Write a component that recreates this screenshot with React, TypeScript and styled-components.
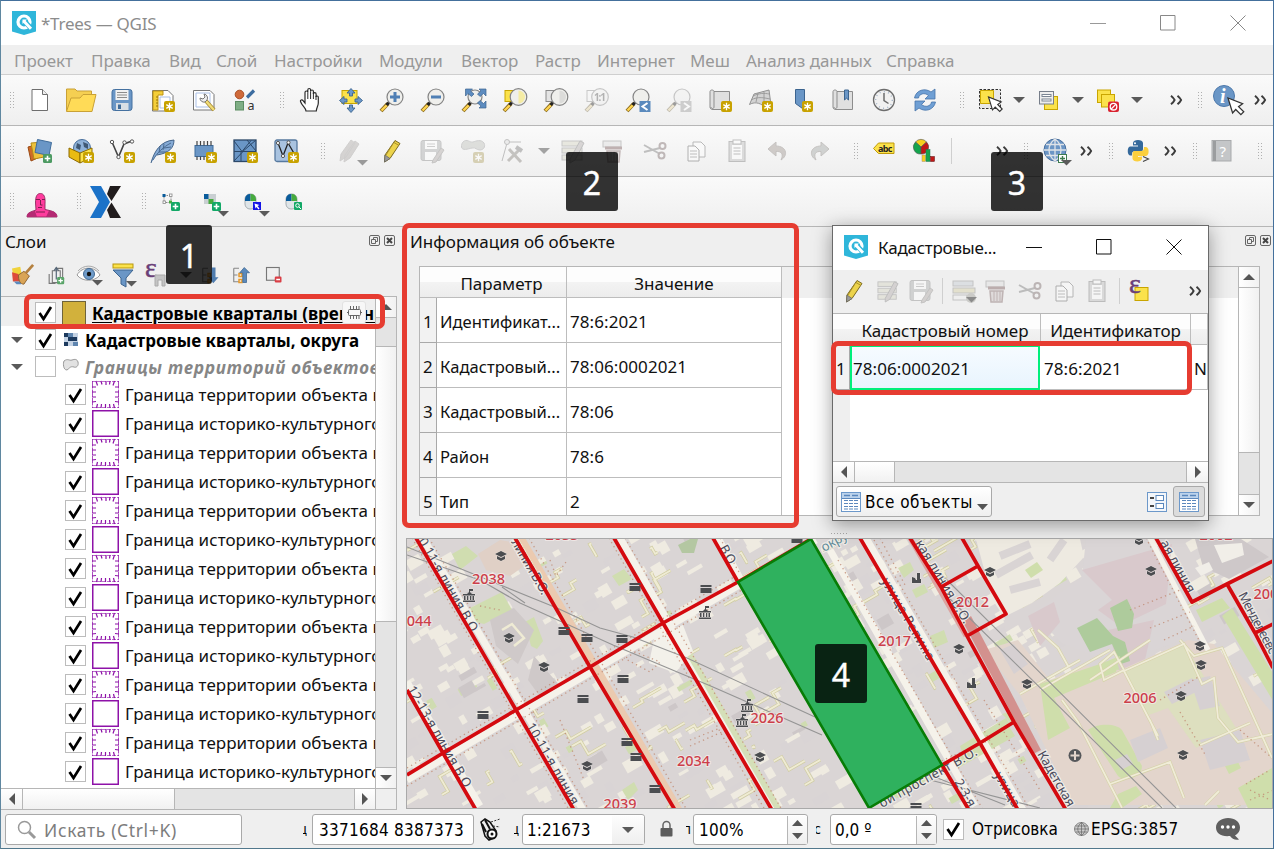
import React from 'react';
import styled, { createGlobalStyle, css } from 'styled-components';

const UI = '"Noto Sans", "Open Sans", sans-serif';
const TAHOMA = '"DejaVu Sans Condensed", "DejaVu Sans", "Noto Sans", sans-serif';

const GlobalStyle = createGlobalStyle`
  *, *::before, *::after { box-sizing: border-box; }
  body { margin: 0; overflow: hidden; font-family: ${UI}; font-size: 17px; color: #111; }
  svg { display: block; overflow: visible; flex: none; }
`;

/* ---------- window frame ---------- */
const Window = styled.div`
  position: relative; width: 1274px; height: 849px; background: #efefef;
  border: 1px solid #44709c; border-left-color: #5f87a0; border-bottom-color: #51788c;
  display: flex; flex-direction: column; overflow: hidden;
`;
const TitleBar = styled.header`
  height: 44px; background: #fff; display: flex; align-items: center; padding: 0 27px 0 11px; flex: none;
`;
const Title = styled.span<{ $color?: string; $ml?: number }>`
  color: ${p => p.$color ?? '#8c8c8c'}; font-size: 17px; letter-spacing: -0.25px; white-space: pre; margin-left: ${p => p.$ml ?? 5}px;
`;
const WinButtons = styled.div<{ $gap: number }>`
  margin-left: auto; display: flex; align-items: center; gap: ${p => p.$gap}px;
`;
const MenuBar = styled.nav`
  height: 30px; flex: none; display: flex; align-items: center; padding-left: 13px;
  border-bottom: 1px solid #cfcfcf; color: #989898; font-size: 17px; background: #efefef;
`;
const MenuItem = styled.span<{ $w: number }>`
  width: ${p => p.$w}px; white-space: nowrap; letter-spacing: -0.05px; padding-top: 1px;
`;
const Toolbar = styled.div<{ $h: number }>`
  height: ${p => p.$h}px; flex: none; display: flex; align-items: center;
  background: linear-gradient(#fafafa, #efefef); border-bottom: 1px solid #b6b6b6;
`;
const Slot = styled.div<{ $w?: number; $end?: boolean; $dim?: boolean; $y?: number }>`
  width: ${p => p.$w ?? 41}px; flex: none; display: flex; align-items: center;
  justify-content: ${p => (p.$end ? 'flex-end' : 'center')};
  padding-top: ${p => p.$y ?? 0}px;
  opacity: ${p => (p.$dim ? 0.42 : 1)};
  ${p => p.$dim && css`filter: grayscale(0.6);`}
`;
const HandleBox = styled.div<{ $pl: number; $w: number }>`
  width: ${p => p.$w}px; padding-left: ${p => p.$pl}px; flex: none;
`;
const HandleDots = styled.div`
  width: 4px; height: 17px;
  background-image: linear-gradient(#b0b0b0, #b0b0b0), linear-gradient(#b0b0b0, #b0b0b0);
  background-size: 1px 100%, 1px 100%; background-position: 0 0, 3px 0; background-repeat: no-repeat;
  mask-image: repeating-linear-gradient(#000 0 1px, transparent 1px 3px);
`;
const Separator = styled.div`width: 1px; height: 26px; background: #cfcfcf;`;
const Handle = ({ pl = 14.5, w = 24 }: { pl?: number; w?: number }) => (
  <HandleBox $pl={pl} $w={w}><HandleDots /></HandleBox>
);

/* ---------- icons ---------- */
const Ic = ({ children, s = 24 }: { children: React.ReactNode; s?: number }) => (
  <svg width={s} height={s} viewBox="0 0 24 24" fill="none">{children}</svg>
);
const Star = ({ x = 13, y = 13 }: { x?: number; y?: number }) => (
  <g transform={`translate(${x} ${y})`}>
    <rect width="11" height="11" rx="2" fill="#c8a200" />
    <path d="M5.5 1.8v7.4M2.3 3.6l6.4 3.8M8.7 3.6L2.3 7.4" stroke="#fff" strokeWidth="1.3" />
    <circle cx="5.5" cy="5.5" r="1.2" fill="#fff" />
  </g>
);
const Plus = ({ x = 14, y = 14, c = '#4c9a62' }: { x?: number; y?: number; c?: string }) => (
  <g transform={`translate(${x} ${y})`}>
    <rect width="9" height="9" rx="1.5" fill={c} />
    <path d="M4.5 1.7v5.6M1.7 4.5h5.6" stroke="#fff" strokeWidth="1.6" />
  </g>
);
const Drop = ({ x, y, c = '#5a5a5a' }: { x: number; y: number; c?: string }) => (
  <path d={`M${x} ${y}h11l-5.5 5.5z`} fill={c} />
);
const DropIcon = ({ c = '#5a5a5a' }: { c?: string }) => (
  <svg width="12" height="6" viewBox="0 0 12 6"><path d="M0 0h12L6 6z" fill={c} /></svg>
);
const More = () => (
  <svg width="13" height="10" viewBox="0 0 13 10" fill="none">
    <path d="M1 .7c2 1.7 3 3 3.6 4.3C4 6.300 3 7.600 1 9.300M7.500 .7c2 1.700 3 3 3.600 4.300-.6 1.300-1.600 2.600-3.600 4.300" stroke="#3c3c3c" strokeWidth="1.9" />
  </svg>
);
const Logo = () => (
  <svg width="24" height="24" viewBox="0 0 24 24" fill="none">
    <path d="M0 0h24v20.500L12 24 0 20.500z" fill="#2fb6da" />
    <circle cx="12" cy="11" r="6" stroke="#fff" strokeWidth="3.200" />
    <path d="M11 9l9 9" stroke="#2fb6da" strokeWidth="5" />
    <path d="M11.500 9.800l7.500 8" stroke="#fff" strokeWidth="3" />
    <path d="M10.500 8.500h4.500l-4.500 4.500z" fill="#fff" />
  </svg>
);
const Page = () => (
  <Ic><path d="M4 1.500h10.500l5 5v16H4z" fill="#fff" stroke="#6e6e6e" /><path d="M14.500 1.500v5h5" stroke="#6e6e6e" fill="#eee" /></Ic>
);
const Folder = () => (
  <Ic>
    <path d="M-2.500 23V1h8.500l2 2h14.500v7" fill="#f5cf52" stroke="#c9a136" />
    <path d="M-2.500 23.500L2 10h9l3-3.500h13L23 23.500z" fill="#ffdb57" stroke="#c9a136" strokeLinejoin="round" />
  </Ic>
);
const Save = () => (
  <Ic>
    <rect x="2" y="1.500" width="20" height="21" rx="2.500" fill="#6a96c6" stroke="#4571a0" />
    <rect x="5.500" y="2" width="13" height="10" fill="#f2f2f2" />
    <path d="M7 4.500h10M7 7h10M7 9.500h10" stroke="#8c8c8c" />
    <rect x="6" y="15" width="12.500" height="7" fill="#d9dfe5" /><rect x="8" y="16.500" width="3" height="4.500" fill="#3f6b99" />
  </Ic>
);
const NewLayout = () => (
  <Ic>
    <path d="M1.500 2.500H17l5 5V23H1.500z" fill="#fff" stroke="#777" />
    <path d="M9 9h10v11H9z" stroke="#a9bfe6" />
    <path d="M2 3h10v4H7v15H2z" fill="#f4cf3a" stroke="#bd9414" /><path d="M5 9h2M5 12h2M5 15h2M5 18h2" stroke="#96740a" />
    <Star />
  </Ic>
);
const Layouts = () => (
  <Ic>
    <path d="M1.500 2.500H18l4 4V22H1.500z" fill="#fff" stroke="#777" /><path d="M4 5h14v14H4z" stroke="#a9bfe6" />
    <path d="M14 13l8 9" stroke="#a38631" strokeWidth="4" /><path d="M14 13l8 9" stroke="#f0dc77" strokeWidth="2.500" />
    <path d="M8 10a4 4 0 0 0 5 4l2-2a4 4 0 0 0-3-6l1 3-2 2z" fill="#eee" stroke="#777" />
  </Ic>
);
const StyleIcon = () => (
  <Ic>
    <circle cx="6.500" cy="6.500" r="4.300" fill="#cf6a3a" stroke="#aa4d23" />
    <path d="M14 9.500l7-7" stroke="#3d6da0" strokeWidth="3.200" />
    <rect x="2.500" y="13.500" width="8" height="8.500" fill="#7fae85" stroke="#5c8d63" />
    <text x="14.500" y="22" fontFamily={UI} fontSize="12.500" fill="#333">a</text>
  </Ic>
);
const Hand = () => (
  <Ic>
    <path d="M8 23c0-3-4-5-5.500-9.500-.5-1.500 1.500-2.300 2.600-.8L7 15V4.500c0-2 2.800-2 2.800 0V2c0-2 2.800-2 2.800 0v1.500c0-2 2.800-2 2.800 0V6c0-1.800 2.700-1.800 2.700 0v3c0-1.500 2.200-1.300 2.200.3V15c0 3-2 5-2 8z" fill="#fff" stroke="#2b2b2b" strokeWidth="1.200" />
    <path d="M9.800 4.500V11M12.600 3.500V11M15.400 5V11M18 8v4" stroke="#2b2b2b" />
  </Ic>
);
const PanSel = () => (
  <Ic>
    <rect x="3" y="2.500" width="15" height="13" fill="#fbe24b" stroke="#c9a500" />
    <path d="M12 .5l4 4.500h-2.500v3h-3V5H8zM12 24.500l4-4.500h-2.500v-3h-3v3H8zM.5 12.500l4.500-4V11h3v3H5v2.500zM23.500 12.500l-4.500-4V11h-3v3h3v2.500z" fill="#6c98ca" stroke="#3c648f" strokeWidth=".9" />
  </Ic>
);
const Lens = ({ children, lx = 14, r = 8 }: { children?: React.ReactNode; lx?: number; r?: number }) => (
  <>
    <path d="M8 15.500L1 23" stroke="#8a6a1c" strokeWidth="4" /><path d="M7 17L1.500 22.500" stroke="#ffd551" strokeWidth="2.400" />
    <path d="M9 14.500l-2.500 2.500" stroke="#222" strokeWidth="3" />
    <circle cx={lx} cy="9" r={r} fill="#efefec" stroke="#848484" strokeWidth="1.200" />
    {children}
  </>
);
const ZoomIn = () => <Ic><Lens lx={15}><path d="M15 4v10M10 9h10" stroke="#4f7fb4" strokeWidth="3" /></Lens></Ic>;
const ZoomOut = () => <Ic><Lens lx={15}><path d="M10 9h10" stroke="#4f7fb4" strokeWidth="3" /></Lens></Ic>;
const ZoomFull = () => (
  <Ic>
    <Lens r={7} lx={13} />
    <path d="M3.500 1h7L8.500 3l3.500 3-2.500 2.500L6 5.500 3.500 8zM24 1h-7l2 2-3.500 3L18 8.500l3.500-3L24 8zM24 20h-7l2-2-3.500-3L18 12.500l3.500 3L24 13z" fill="#5d8cc0" stroke="#3c648f" strokeWidth=".7" />
  </Ic>
);
const ZoomSel = () => (
  <Ic><rect x="2" y="2.500" width="12" height="11" fill="#fbe24b" stroke="#c9a500" /><Lens lx={15.500} r={8.300}><path d="M15.500 2.500v13a6.500 6.500 0 0 0 0-13z" fill="#f5eca4" /></Lens></Ic>
);
const ZoomLayer = () => (
  <Ic><rect x="2" y="2.500" width="12" height="11" fill="#e4e4e4" stroke="#8a8a8a" /><Lens lx={15.500} r={8.300}><path d="M15.500 2.500v13a6.500 6.500 0 0 0 0-13z" fill="#dcdcda" /></Lens></Ic>
);
const ZoomOne = () => (
  <Ic><rect x="2" y="2.500" width="12" height="11" stroke="#8a8a8a" /><Lens lx={15} r={8.300}><text x="9" y="12.500" fontSize="10" fontWeight="700" fontFamily={UI} fill="#555" textLength="12">1:1</text></Lens></Ic>
);
const ZoomLast = ({ next }: { next?: boolean }) => (
  <Ic><Lens lx={15} /><rect x="13.500" y="13" width="11" height="11" fill={next ? '#999' : '#5b8abd'} /><path d={next ? 'M17 15l5 3.500-5 3.500' : 'M21.500 15l-5 3.500 5 3.500'} stroke="#fff" strokeWidth="2" /></Ic>
);
const MapView = ({ book }: { book?: boolean }) => (
  <Ic>
    <path d="M6 3.500h15.500v18H5c-2 0-3-1-3-2.500V3.500c0-2 4-2 4 0V19c0 2-3 2-3 0" fill="#e0e0e0" stroke="#8d8d8d" />
    {book ? <path d="M13.500 2h4v10l-2-1.800-2 1.800z" fill="#6a96c6" stroke="#3c648f" /> : <Star x={13} y={13} />}
  </Ic>
);
const View3D = () => (
  <Ic><path d="M.5 16.500L5 6l15-4 2 15-6 2C10 14 5 14 .5 16.500z" fill="#d3d3d3" stroke="#929292" /><path d="M2 12c7-4 14-2 19-1M9 5l-2 9M15 4v13M4 8c6-3 12-3 16-2" stroke="#929292" strokeWidth=".8" /><Star /></Ic>
);
const Bookmark = () => <Ic><path d="M5.500 1.500h9V16l-2 4.500-7-5z" fill="#6a96c6" stroke="#3c648f" /><Star x={12} /></Ic>;
const Clock = () => (
  <Ic><circle cx="12" cy="12" r="10.500" fill="#f1f1f1" stroke="#6d6d6d" strokeWidth="1.300" /><circle cx="12" cy="12" r="8.300" stroke="#a5b5c9" strokeDasharray="1 3.300" strokeWidth="1.400" /><path d="M12 5v7.500l4.500 3" stroke="#6d6d6d" strokeWidth="1.500" /></Ic>
);
const Refresh = () => (
  <Ic>
    <path d="M1.500 10C3 2 12-.5 18 4l4-3v10H12l3.500-3.500C11.500 4 6 6 5.500 10z" fill="#6f9fd4" stroke="#4674aa" strokeWidth=".8" />
    <path d="M22.500 14C21 22 12 24.500 6 20l-4 3V13h10l-3.500 3.500c4 3.500 9.500 1.500 10-2.500z" fill="#6f9fd4" stroke="#4674aa" strokeWidth=".8" />
  </Ic>
);
const Cursor = ({ x, y, s = 1 }: { x: number; y: number; s?: number }) => (
  <path transform={`translate(${x} ${y}) scale(${s})`} d="M0 0l4 13 2.700-3 4.500 4.500 2.500-2.500L9.200 7.500l3.500-2.500z" fill="#fff" stroke="#333" strokeWidth="1.100" />
);
const SelectIcon = () => (
  <Ic><rect x="1.500" y="1.500" width="21" height="19" fill="#e8e8e8" stroke="#333" strokeDasharray="2.500 1.500" /><path d="M2.500 2.500h13v13h-13z" fill="#fbe24b" stroke="#c9a500" /><Cursor x={10.500} y={9} /></Ic>
);
const SelForm = () => (
  <Ic><rect x="8.500" y="8.500" width="13" height="13" fill="#fbe24b" stroke="#c9a500" /><rect x="3.500" y="3.500" width="14" height="12.500" fill="#eee" stroke="#777e8a" /><path d="M5.500 7.500h10M5.500 12h10" stroke="#7c8694" strokeWidth="3" /><path d="M6.500 7.500h8M6.500 12h8" stroke="#fff" /></Ic>
);
const Deselect = () => (
  <Ic>
    <rect x="2.500" y="2" width="13" height="12.500" fill="#fbe24b" stroke="#c9a500" /><rect x="6.500" y="6.500" width="13" height="12.500" fill="#fbe24b" stroke="#c9a500" />
    <rect x="13" y="13.500" width="11" height="10.500" rx="2" fill="#d9222f" /><circle cx="18.500" cy="18.700" r="3.300" stroke="#fff" strokeWidth="1.300" /><path d="M16.200 21l4.600-4.600" stroke="#fff" strokeWidth="1.300" />
  </Ic>
);
const Identify = () => (
  <Ic><circle cx="10" cy="8" r="10.500" fill="#6a96c6" stroke="#4d79ab" /><text x="6" y="14.500" fontSize="20" fontStyle="italic" fontWeight="700" fontFamily='"Liberation Serif", serif' fill="#fff">i</text><Cursor x={14} y={10} s={1.150} /></Ic>
);

const AddLayer = () => (
  <Ic><path d="M0 8l11-3 3 12-11 5z" fill="#cf6a28" stroke="#9a4a14" /><path d="M3 4l12-1 1 15-10 2z" fill="#eec23c" stroke="#b58b16" /><path d="M9.500 0.500l14 3-2.500 13-14-3z" fill="#6a96c6" stroke="#3f6c9b" /><Plus x={15} y={15} /></Ic>
);
const GeoPkg = () => (
  <Ic><circle cx="13" cy="9" r="8.500" fill="#8fb2d8" stroke="#486f9c" /><path d="M8 4l4 2-1 5-4-2zM14 3l5 2v5l-4-2z" fill="#3f5874" /><path d="M0 9l11 5v10L0 18z" fill="#e9bb13" stroke="#8d6a00" /><path d="M11 14l12-5v9l-12 6z" fill="#fbe24b" stroke="#8d6a00" /><Star x={14} /></Ic>
);
const Vec = () => (
  <Ic><path d="M2 3l6.500 15L14 5l8-3" stroke="#444" strokeWidth="1.600" /><g fill="#fff" stroke="#555"><circle cx="2" cy="3" r="1.700" /><circle cx="8.500" cy="18" r="1.700" /><circle cx="14.500" cy="3.500" r="1.700" /><circle cx="22" cy="2.500" r="1.700" /></g><Star x={14} /></Ic>
);
const Feather = () => (
  <Ic><path d="M0 24C3 13 9 2 23 1c0 8-5 13-17 15" fill="#86abd6" stroke="#44648a" /><path d="M2 21C6 14 12 8 20 4M8 14l1-7M12 11l1-6M9 13h7M13 9l7-1" stroke="#44648a" strokeWidth=".9" /><Star x={14} /></Ic>
);
const Chip = () => (
  <Ic><rect x="3" y="6.500" width="18" height="11" fill="#6a96c6" stroke="#3f6c9b" /><path d="M5 2v4.500M8.500 2v4.500M12 2v4.500M15.500 2v4.500M19 2v4.500M5 17.500V21M8.500 17.500V21M12 17.500V21" stroke="#444" strokeWidth="1.200" /><Star x={14} /></Ic>
);
const Mesh = ({ v }: { v?: boolean }) => (
  <Ic>
    <rect x="1" y="1" width="22" height="21.500" rx={v ? 2 : 0} fill={v ? '#a9c3e0' : '#6a96c6'} stroke={v ? '#57799f' : '#2c4869'} strokeWidth="1.300" />
    {v ? <><path d="M4 4l5 13 5-13 7 12" stroke="#222" strokeWidth="1.300" /><g fill="#fff" stroke="#555"><circle cx="4" cy="4" r="1.600" /><circle cx="9" cy="17" r="1.600" /><circle cx="14.500" cy="3.500" r="1.600" /></g></>
      : <path d="M1 12.500h22M9 12.500l9-11M1 22l9-9.500M1 2l8 10.500M8 13v10M14 1l9 11M23 1L9 13" stroke="#2c4869" />}
    <Star x={14} />
  </Ic>
);
const Pencil = ({ s = 24 }: { s?: number }) => (
  <Ic s={s}><path d="M5 16L15 1.500l5 3L10 19.500 4.500 23z" fill="#ecd34b" stroke="#7b6a20" strokeLinejoin="round" /><path d="M14 3.500l5 3M12.500 5.500L6 16" stroke="#a88f2a" /><path d="M5 16l5 3.500L4.500 23z" fill="#9a9a9a" stroke="#666" strokeWidth=".7" /></Ic>
);
const Pencils = () => (
  <Ic><path d="M2 15L12 1l4 3L7 18l-6 4zM6 16L16 2l4 3-9 14-6 4z" fill="#b0a5a0" stroke="#a09a96" /><Drop x={18} y={21} c="#222" /></Ic>
);
const SaveEdit = () => (
  <Ic><rect x="1" y="1.500" width="20" height="20" rx="2" fill="#a4a8ac" stroke="#888" /><rect x="5" y="2" width="12" height="8" fill="#fff" /><path d="M7 5h8M7 7.500h8" stroke="#999" /><rect x="5" y="13" width="11" height="8" fill="#fff" /><path d="M13 21l8-12 3 2-8 12-4 1z" fill="#b5a5a0" stroke="#8a8580" /></Ic>
);
const AddPoly = () => (
  <Ic><path d="M2 3c4-4 7 1 10 0s8-3 11 1c2 4-1 7-4 7-4 0-4-3-8-2S1 12 .5 8C.3 6 1 4 2 3z" fill="#b9bfb2" stroke="#999" /><Star x={12} /></Ic>
);
const Vertex = () => (
  <Ic><path d="M5 4L0 22M5 3h14" stroke="#777" /><circle cx="5" cy="3" r="2.500" fill="#ddd" stroke="#777" /><path d="M7 10l12 13M18 10L6 22" stroke="#8a7f70" strokeWidth="3" /><path d="M14 8l6 4" stroke="#777" strokeWidth="4" /></Ic>
);
const EditTable = ({ s = 24 }: { s?: number }) => (
  <Ic s={s}><rect x="1" y="2" width="20" height="5" fill="#d8d4a6" stroke="#888" /><rect x="1" y="9" width="20" height="5" fill="#d8d4a6" stroke="#888" /><rect x="1" y="16" width="20" height="5" fill="#d8d4a6" stroke="#888" /><path d="M9 20L19 2l4 2-9 17-5 3z" fill="#b5a9a5" stroke="#777" /></Ic>
);
const Trash = () => (
  <Ic><rect x="1" y="2" width="18" height="6" fill="#ddd" stroke="#888" /><path d="M3 9h17" stroke="#9c4a4a" strokeWidth="3" /><path d="M5 12h13l-1 11H6z" fill="#d8bcbc" stroke="#9c5a5a" strokeWidth="1.500" /><path d="M9 12v10M12 12v10M15 12v10" stroke="#9c5a5a" /></Ic>
);
const Cut = () => (
  <Ic><path d="M1 6l16 9M1 13l16-4" stroke="#777" strokeWidth="2" /><circle cx="19.500" cy="7" r="3" stroke="#8a6060" strokeWidth="2" /><circle cx="18.500" cy="16.500" r="3" stroke="#8a6060" strokeWidth="2" /></Ic>
);
const Copy = () => (
  <Ic><path d="M9 3h8l4 4v11H9z" fill="#fff" stroke="#666" /><path d="M4 7h7l4 4v11H4z" fill="#fff" stroke="#555" /><path d="M6 12h7M6 15h7M6 18h7" stroke="#777" /></Ic>
);
const Paste = () => (
  <Ic><rect x="4" y="2.500" width="16" height="20" fill="#bbb" stroke="#777" /><rect x="7" y="6" width="10" height="14" fill="#fff" /><path d="M8.500 9h7M8.500 12h7M8.500 15h7" stroke="#777" /><rect x="8" y="1" width="8" height="4" fill="#fff" stroke="#777" /></Ic>
);
const Undo = ({ flip }: { flip?: boolean }) => (
  <Ic><g transform={flip ? 'translate(24 0) scale(-1 1)' : undefined}><path d="M2 10l8-7v4c10 0 13 9 5 14 3-6 0-9-5-8.500V17z" fill={flip ? '#9aa59d' : '#a98f80'} stroke="#8a7a70" /></g></Ic>
);
const Abc = () => (
  <Ic><path d="M1.500 9.500l5-5.500h15.500v10.500H6.500z" fill="#fbe24b" stroke="#c09a0a" /><text x="6" y="12.500" fontSize="9" fontWeight="700" fontFamily={UI} fill="#222" textLength="14.500">abc</text></Ic>
);
const Diagram = () => (
  <Ic><path d="M8 8L2.500 3a7 7 0 0 1 11 0z" fill="#f6cf1d" stroke="#555" strokeWidth=".6" /><path d="M8 8L2.500 3a7 7 0 0 0 5.500 12z" fill="#14a44d" stroke="#555" strokeWidth=".6" /><path d="M8 8l5.500-5A7 7 0 0 1 8 15z" fill="#c11717" stroke="#555" strokeWidth=".6" /><rect x="9" y="16" width="3.500" height="6.500" fill="#f6cf1d" stroke="#a87" strokeWidth=".5" /><rect x="13" y="10.500" width="4" height="12" fill="#14a44d" stroke="#275" strokeWidth=".5" /><rect x="17.500" y="17.500" width="4" height="5" fill="#c11717" stroke="#511" strokeWidth=".5" /></Ic>
);
const GlobePlus = () => (
  <Ic><circle cx="12" cy="11" r="11" fill="#6b95c5" stroke="#496f9d" /><path d="M12 0v22M1 11h22M3 5.500h18M3 16.500h18M12 0C4 6 4 16 12 22M12 0c8 6 8 16 0 22" stroke="#dfe3e8" strokeWidth="1.300" /><rect x="15.500" y="15.500" width="8" height="8" fill="#fff" stroke="#3f7b4e" /><path d="M19.500 17v5M17 19.500h5" stroke="#3f7b4e" strokeWidth="1.400" /><Drop x={18} y={21} /></Ic>
);
const Python = () => (
  <Ic>
    <path d="M7 6V4c0-4 10-4 10 0v6c0 2-1 2.500-3 2.500H8.500C6 12.500 6 14 6 16.500H4C1 16.500 1 7.500 4 7.500h8V6.500H7z" fill="#35699b" />
    <path d="M16 17.500v2c0 4-9.500 4-9.500 0v-5c0-2 1-2.500 3-2.500h5.500c2.500 0 3-1.500 3-4h2c3.500 0 3.500 9 0 9h-8v1z" fill="#fbcf3e" />
    <circle cx="9" cy="4.200" r="1" fill="#fff" /><path d="M17 17.500l5.500 2.500-5.500 2.500" stroke="#444" strokeWidth="1.100" />
  </Ic>
);
const Help = () => (
  <Ic><rect x="2" y="1.500" width="19" height="20.500" fill="#c4c6c8" stroke="#a8aaac" /><path d="M4.500 2v20" stroke="#9b9d9f" strokeWidth="3" /><text x="9.500" y="18" fontSize="15" fontFamily={UI} fill="#fff">?</text></Ic>
);
const Statue = () => (
  <svg width="30" height="24" viewBox="0 0 30 24"><path d="M0 24c0-4 3-5 9-7l-.500-7C8.500 3 10 .500 13.500 .500S18.500 4 18 11v5.500c8 1.500 12 3 12 7.500z" fill="#ff3c9e" stroke="#8f2a5f" strokeWidth=".9" /><path d="M0 24c0-5 3-5 8-6l2 6zM30 24c0-5-4-6-8-6.500l-3 6.500z" fill="#b42a73" /><path d="M9 6.500h4M15 6.500h3M13.500 7v5h2M11 14.500h4M9 19h9" stroke="#7a1f4d" fill="none" /></svg>
);
const XLogo = () => (
  <svg width="31" height="32" viewBox="0 0 31 32"><path d="M0 0h11l9 16-9 16H0l9-16z" fill="#1b72c8" /><path d="M20 0h11L21.500 15 17 8zM17 24l4.500-7.500L31 32H20z" fill="#211c1d" /></svg>
);
const GreenTool = ({ kind }: { kind: 'nodes' | 'grid' | 'cursor' | 'search' }) => (
  <Ic>
    {kind === 'nodes' && <><path d="M5 5.500h7v7H5z" stroke="#888" strokeDasharray="1.500 1" /><rect x="3.500" y="4" width="3" height="3" fill="#0a5c9c" /><g fill="#fff" stroke="#888" strokeWidth=".8"><rect x="10.500" y="4" width="2.500" height="2.500" /><rect x="4" y="11" width="2.500" height="2.500" /></g><rect x="10" y="10.500" width="3" height="3" fill="#46aa3e" /><Plus x={12} y={12} c="#12a866" /></>}
    {kind === 'grid' && <><rect x="4" y="4" width="12" height="10" fill="#c9cfd2" /><rect x="4" y="4" width="4.500" height="5" fill="#0a5c9c" /><rect x="8.500" y="9" width="5" height="5" fill="#46aa3e" /><Plus x={12} y={12} c="#12a866" /><Drop x={18} y={21} /></>}
    {(kind === 'cursor' || kind === 'search') && <>
      <rect x="4" y="4" width="11" height="15" rx="5" fill="#dfe5e8" stroke="#a5adb2" /><path d="M9.500 4v7H4V9a5 5 0 0 1 5.500-5z" fill="#0a5c9c" /><path d="M9.500 4v7H15V9a5 5 0 0 0-5.500-5z" fill="#46aa3e" />
      {kind === 'cursor' ? <><rect x="12" y="12" width="8" height="8" fill="#1414e6" /><path d="M13.500 13.500l5 1.500-2 1 2 2.500-1 1-2-2.500-1 1.500z" fill="#fff" /><Drop x={18} y={21} /></>
        : <><rect x="12" y="12" width="8" height="8" rx="1" fill="#12a866" /><circle cx="15.500" cy="15.500" r="1.800" stroke="#fff" /><path d="M17 17l2 2" stroke="#fff" /></>}
    </>}
  </Ic>
);

/* ---------- layers dock ---------- */
const Main = styled.main`flex: 1; display: flex; min-height: 0;`;
const LayersDock = styled.section`width: 397px; flex: none; display: flex; flex-direction: column;`;
const DockTitle = styled.div<{ $pl: number; $h: number; $pr: number }>`
  height: ${p => p.$h}px; padding: 4px ${p => p.$pr}px 0 ${p => p.$pl}px; display: flex; align-items: flex-start;
  justify-content: space-between; flex: none; white-space: nowrap; line-height: 22px;
`;
const DockButtons = styled.div`display: flex; gap: 4px; padding-top: 4px;`;
const DockBtns = () => (
  <DockButtons>
    <svg width="11" height="11" viewBox="0 0 11 11" fill="none"><rect x=".5" y=".5" width="10" height="10" rx="1.500" stroke="#666" /><path d="M2.500 4.500h4v4h-4zM4.500 4V2.500h4v4H7" stroke="#666" /></svg>
    <svg width="11" height="11" viewBox="0 0 11 11" fill="none"><rect x=".5" y=".5" width="10" height="10" rx="1.500" stroke="#666" /><path d="M3 3l5 5M8 3L3 8" stroke="#444" strokeWidth="2" /></svg>
  </DockButtons>
);
const LayerTools = styled.div`height: 39px; flex: none; display: flex; align-items: center; padding: 0 0 3px 5px;`;
const TreeFrame = styled.div`
  flex: 1; min-height: 0; width: 396px; display: grid; grid-template-columns: 374px 22px; grid-template-rows: 1fr 22px;
  border-top: 1px solid #b6b6b6;
`;
const Tree = styled.div`background: #fff; overflow: hidden;`;
const TreeRow = styled.div<{ $h: number; $pl: number; $sel?: boolean }>`
  height: ${p => p.$h}px; padding-left: ${p => p.$pl}px; display: flex; align-items: center;
  background: ${p => (p.$sel ? '#efefef' : '#fff')}; overflow: hidden; white-space: nowrap;
  ${p => p.$sel && css`padding-top: 2px;`}
`;
const Twist = styled.div`width: 23px; flex: none;`;
const Box = styled.div`
  width: 21px; height: 21px; flex: none; border: 1px solid #bcbcbc; background: #fff;
  display: flex; align-items: center; justify-content: center;
`;
const Check = ({ on = true }: { on?: boolean }) => (
  <Box>{on && <svg width="15" height="16" viewBox="0 0 15 16" fill="none"><path d="M1.500 8l4 6L13 2" stroke="#000" strokeWidth="2.700" /></svg>}</Box>
);
const SwatchSolid = styled.div`width: 24px; height: 24px; margin: 0 6px 0 6px; background: #d2b13c; border: 1px solid #6f643a; flex: none;`;
const RowIcon = styled.div<{ $l: number; $r: number; $b?: number }>`margin: 0 ${p => p.$r}px 0 ${p => p.$l}px; padding-bottom: ${p => p.$b ?? 0}px; flex: none;`;
const Label = styled.span<{ $kind?: 'bold' | 'italic' | 'active' }>`
  font-size: 17px; padding-top: 1px; letter-spacing: 0.05px; line-height: 24px;
  ${p => (p.$kind === 'bold' || p.$kind === 'active') && css`font-weight: 700; color: #000; padding-top: 2px; letter-spacing: 0;`}
  ${p => p.$kind === 'active' && css`text-decoration: underline; text-underline-offset: 2px;`}
  ${p => p.$kind === 'italic' && css`font-weight: 700; font-style: italic; color: #868686; letter-spacing: 0.8px; padding-top: 2px;`}
`;
const ChipButton = styled.div`
  position: absolute; left: 341px; top: 300px; width: 24px; height: 23px; background: #f7f7f7; border: 1px solid #e2e2e2;
  border-radius: 3px; display: flex; align-items: center; justify-content: center;
`;
const Spiky = () => (
  <svg width="27" height="27" viewBox="0 0 27 27" fill="none" stroke="#8e12a8">
    <path d="M.5 0v27M26.500 0v27" strokeDasharray="7.500 1" strokeOpacity=".75" /><path d="M0 .5h27M0 26.500h27" strokeDasharray="4 1" strokeOpacity=".6" />
    <path d="M4 0l1.500 4.500M9 0l1 3.500M14 0v4M18 0l-.500 3.500M22.500 0l-1.500 4.500M4.500 27l1-4M9 27l.500-4M13.500 27v-4M18 27l-.500-4M22.500 27l-1-4M0 6h4M0 11h4M0 16h4M0 21l4-.500M27 6h-4M27 11h-4M27 16h-4M27 21l-4-.500" strokeWidth="1.200" />
  </svg>
);
const Outline = () => (
  <svg width="27" height="27" viewBox="0 0 27 27" fill="none"><rect x=".75" y=".75" width="25.500" height="25.500" stroke="#8e12a8" strokeWidth="1.500" /></svg>
);
const SwatchBox = styled.div`width: 27px; margin: 0 6px 0 6px; flex: none;`;

/* ---------- scrollbars ---------- */
const VBar = styled.div`width: 22px; flex: none; display: flex; flex-direction: column; background: #e4e4e4; border-left: 1px solid #b6b6b6; border-right: 1px solid #b6b6b6;`;
const HBar = styled.div`display: flex; background: #e4e4e4; border-top: 1px solid #b6b6b6; border-bottom: 1px solid #b6b6b6; height: 22px; flex: none;`;
const Corner = styled.div`border: 1px solid #b6b6b6; background: #efefef;`;
const Piece = styled.div<{ $len?: number; $v?: boolean; $groove?: boolean; $last?: boolean }>`
  ${p => (p.$len ? css`flex: none;` : css`flex: 1;`)}
  ${p => (p.$v ? css`height: ${p.$len ?? 0}px; border-bottom: ${p.$last ? 0 : 1}px solid #b6b6b6;` : css`width: ${p.$len ?? 0}px; border-right: ${p.$last ? 0 : 1}px solid #b6b6b6;`)}
  background: ${p => (p.$groove ? '#e4e4e4' : p.$v ? 'linear-gradient(90deg,#fff,#f1f1f1)' : 'linear-gradient(#fff,#f1f1f1)')};
  display: flex; align-items: center; justify-content: center;
`;
const Tri = ({ d }: { d: 'u' | 'd' | 'l' | 'r' }) => (
  <svg width="12" height="12" viewBox="0 0 12 12"><path fill="#555" d={{ u: 'M0 9h12L6 3z', d: 'M0 3h12L6 9z', l: 'M9 0v12L3 6z', r: 'M3 0v12l6-6z' }[d]} /></svg>
);

/* ---------- info dock ---------- */
const RightSide = styled.section`flex: 1; padding: 0 0 0 8px; display: flex; flex-direction: column; min-width: 0;`;
const InfoFrame = styled.div`
  margin-left: 13px; width: 841px; height: 250px; flex: none; border-top: 1px solid #b6b6b6; border-bottom: 1px solid #b6b6b6;
  border-left: 1px solid #b6b6b6; background: #fff; display: flex; justify-content: space-between;
`;
const InfoTable = styled.div`flex: 1; overflow: hidden; background: linear-gradient(#efefef 31px, #fff 31px);`;
const InfoRow = styled.div<{ $head?: boolean }>`
  display: grid; width: 362px; grid-template-columns: ${p => (p.$head ? '147px 215px' : '17px 130px 215px')};
  height: ${p => (p.$head ? 31 : 45)}px; background: ${p => (p.$head ? 'linear-gradient(#fdfdfd 50%, #f3f3f3 50%, #ececec)' : '#fff')};
`;
const Cell = styled.div<{ $center?: boolean; $num?: boolean; $pl?: number; $small?: boolean }>`
  display: flex; align-items: center; justify-content: ${p => (p.$center ? 'center' : 'flex-start')};
  padding: 2px 0 0 ${p => p.$pl ?? (p.$center ? 0 : 3)}px; border-right: 1px solid #bdbdbd; border-bottom: 1px solid #bdbdbd;
  white-space: nowrap; overflow: hidden; font-size: ${p => (p.$small ? 16.6 : 17)}px;
  ${p => !p.$small && !p.$center && css`letter-spacing: 0.08px;`}
  ${p => p.$num && css`background: #f2f2f2; border-color: #a9a9a9;`}
`;
const Splitter = styled.div`height: 22px; display: flex; justify-content: center; align-items: center; flex: none; padding-top: 12px;`;
const SplitDots = styled.div`width: 17px; height: 1px; background: repeating-linear-gradient(90deg, #aaa 0 1px, transparent 1px 3px);`;
const MapFrame = styled.div`width: 867px; height: 271px; border: 1px solid #a9a9a9; overflow: hidden; flex: none;`;

/* ---------- map ---------- */
const rand = (seed: number) => () => {
  seed = (seed * 1664525 + 1013904223) % 4294967296;
  return seed / 4294967296;
};
const blocks = (() => {
  const r = rand(77);
  const out: { x: number; y: number; w: number; h: number; c: string }[] = [];
  for (let i = 0; i < 1700; i++) {
    const a = 5 + r() * 14;
    const b = 3 + r() * 9;
    const k = r();
    out.push({ x: -480 + r() * 900, y: -400 + r() * 760, w: a, h: b, c: k < 0.63 ? '#efebe1' : k < 0.67 ? '#cfdcb0' : k < 0.96 ? '#d9d4d5' : '#cdc7c8' });
  }
  return out;
})();
const alleys = (() => {
  const r = rand(9);
  let d = '';
  for (let i = 0; i < 250; i++) {
    const x = -480 + r() * 900, y = -400 + r() * 760, a = (r() - 0.5) * 54, b = (r() - 0.5) * 34;
    d += `M${x.toFixed(0)} ${y.toFixed(0)}h${a.toFixed(0)}v${b.toFixed(0)}h${(a / 2).toFixed(0)}`;
  }
  return d;
})();
const cards = [[635, 587], [706, 589], [564, 631], [587, 638], [622, 639], [623, 679], [583, 699], [483, 715], [627, 742], [636, 757], [655, 789], [797, 539], [916, 807]];
const caps = [[501, 556], [509, 638], [544, 667], [587, 766], [760, 757], [990, 572], [959, 649], [1027, 684], [1151, 571], [1200, 646], [1201, 665], [1181, 696], [1183, 755], [1139, 540]];
const halls = [[469, 596], [705, 613], [747, 706], [742, 721]];
const monuments = [[916, 578], [971, 683]];
const numbers: [string, number, number][] = [['2038', 488.5, 583.5], ['2044', 415, 626], ['2034', 693.5, 765.5], ['2026', 767, 722.5], ['2039', 620, 808.5], ['2017', 894.5, 646], ['2012', 972.5, 607], ['2006', 1140, 702.5], ['2005', 1270, 599], ['2033', 562, 540], ['2002', 1216, 539.5]];
const streets: [string, number, number, number, number, string?][] = [
  ['0.11-я линия В.О', 418, 541, 60, 106], ['линия В.О.', 511, 542, 60, 62], ['В.О', 719, 548, 60, 20], ['12-13-я линия В.О', 407, 689, 60, 115],
  ['10-11-я линия', 526, 726, 60, 92], ['кая линия В.О.', 915, 543, 59, 95], ['улица Репина', 881, 581, 60, 93], ['улица', 994, 775, 60, 38],
  ['Кадетская', 1037, 754, 60, 62], ['2-3-я', 954, 782, 60, 30], ['ая линия', 1160, 543, 61, 58], ['Менделеевс', 1238, 595, 62, 68],
  ['ой проспект В.О.', 882, 808, -29, 110], ['округ', 824, 552, -29, 34, '#5f8a99'],
];
const redLines = 'M416 538L516 710L574 810M515 538L590 667L675 810M614 538L663 623L772 810M713 538L738 582M407 690L443 753L476 810M407 775L443 753L516 710L590 667L663 623L738 582L811 539M860 538L980 743L1018 810M910 538L941 587L967 636L1014 722L1066 810M962 538L978 566L1006 614L967 636M941 587L978 566M942 765L980 743L1014 722M942 765L969 810M1156 538L1192 602L1227 584L1273 561M1227 584L1255 633L1273 668M1255 633L1273 624';
const campusPaths = 'M1038 630l20 18 10 18M1100 664l14-12 10 18-20 10zM1124 671l60-27 18 40 12-6 4 40 20 24 35-8M1124 671l34 65M1062 700l16 22 44 86M1110 784l60-22 14 36M1040 690l70-40M1090 680l60-40M1180 640l14 16 28-8 50 110M1020 694l60-34M1200 745l50-22M1150 720l8 20M1205 805l14-14';
const MapCanvas = () => (
  <svg width="865" height="269" viewBox="407 539 865 269">
    <rect x="407" y="539" width="866" height="269" fill="#dad5d5" />
    <g transform="rotate(-30 840 670) translate(840 670)">
      {blocks.map((b, i) => <rect key={i} x={b.x} y={b.y} width={b.w} height={b.h} fill={b.c} />)}
      <path d={alleys} fill="none" stroke="#d0cda2" strokeWidth="3.200" /><path d={alleys} fill="none" stroke="#efebd4" strokeWidth="1.800" />
    </g>
    <g fill="#d0ddb0">
      <path d="M452 554l14-8 12 10-18 14zM470 608l32-16 10 18-28 14-8-2zM525 622l9-5 9 24-6 8-6-3zM612 576l12-7 8 10-13 7zM622 790l12-8 4 8-10 10zM1002 714l14-4-4 14zM945 762l64-36 6 10-62 35zM960 746l46-28 4 6-48 28zM1020 695l20-6 36 42-20 10zM870 790l60-24 8 8-40 24zM898 568l12-6 4 8-10 8zM912 590l12-6 4 8-12 6zM930 636l14-6 4 12-14 6z" />
    </g>
    <path d="M478 554l22-14 24 4 6 18-20 14-24-6z" fill="#e0d0c6" />
    <path d="M490 620l24-12 20 22-16 34-22-18zM534 656l26 30-16 16-16-22z" fill="#cfc9c9" />
    <path d="M502 630l10-6 12 14-10 8" fill="none" stroke="#efebd4" strokeWidth="2.500" />
    <path d="M655 635l28-10 10 26-18 22-26-10z" fill="#f3f1ea" />
    <path d="M678 545l12-6h8l-4 14-12 0z" fill="#b4c7a2" />
    <path d="M976 539h104l4 18-24 26-28 20-28 14-12-18z" fill="#eeeae1" />
    <path d="M1000 556l30-12M996 575l36-20M1010 590l30-8M1050 560l14-20" stroke="#d9d4d4" strokeWidth="8" />
    <path d="M1086 539h66l-2 10 34 62-2 30-70 22-50-20-30-30 14-10 36-26z" fill="#dad5d6" />
    <path d="M1082 570l90-26-6 60-46 22-22-16 14-10zM1028 616l26-14 6 20-20 24zM1108 630l46-10-14 62-20-10z" fill="#d9c9cc" />
    <path d="M984 650l34-10 32 40 34-14 36 4 68-30 26 4 59 70v91H1074l-30-60-24-50z" fill="#e3d5cc" />
    <path d="M1124 671l60-27 52 84-40 20-28-40-22 8z" fill="#dddfbf" />
    <path d="M1077 628l20-10 16 18 12 6 5 19-9 3-9-20-22 8zM1110 608l17-9 7 15-2 14-14 3z" fill="#aecb9c" />
    <path d="M1040 684l60-20 20-8-4 16-62 26 16 30-22 12zM1088 730c10-8 30-6 34 0l20 36c0 12-18 16-24 10zM1118 794l18-8 6 8-20 14h-12zM1223 762l12-6 6 12-12 6zM1238 788l34-20v40h-24zM1222 616l10-8 44 70v28zM1196 610l26-12 8 10-28 14zM1025 570l12-8 6 8-12 8z" fill="#cfdeab" />
    <path d="M1195 539h46l28 18-40 22-26-12z" fill="#cec8c9" /><path d="M1195 568l14-6 4 8-12 6zM1214 545l28-2 2 12-22 8z" fill="#f1eee8" />
    <path d="M1164 692l28-14 8 12-28 14zM1115 760l12-6 6 10-12 6zM1000 650l14-6 14 20-14 10zM1190 680l20-4 10 30-20 4zM1130 740l30-12 8 20-30 14zM1200 740l40-10 10 30-40 10z" fill="#d6d0d2" />
    <path d={campusPaths} fill="none" stroke="#d5d2a8" strokeWidth="3" /><path d={campusPaths} fill="none" stroke="#f0ecd8" strokeWidth="1.800" />
    <g fill="none" stroke="#f5f2ea" strokeWidth="7">
      <path d="M423 538L583 810M407 780L816 540M620 538L776 810M718 538L742 582M407 682L480 806M830 550L975 806M866 538L1023 810" />
      <path d="M1150 538L1208 650" strokeWidth="5" />
    </g>
    <path d="M520 538L679 812" stroke="#ebcab0" strokeWidth="9" />
    <path d="M690 655L780 812" stroke="#d5dfb8" strokeWidth="6" />
    <path d="M963 622l8-6 70 134-8 4z" fill="#d3918e" /><path d="M910 538L966 636" stroke="#dca3a0" strokeWidth="5" />
    <g fill="none" stroke="#c08a72" strokeWidth="1.300" strokeDasharray="1.300 3.400" opacity=".8">
      <path d="M429 538L589 810M412 538L569 810M407 768L734 577M407 786L800 556M529 538L688 812M609 538L765 810M625 538L782 810M720 538L740 574M748 578L838 546M838 560L982 808M880 538L905 585M874 540L1030 810M1146 538L1204 650M984 700L1040 790M1164 640l30-14M1150 628l40-16M1130 610l50-20M1160 700l40-24M1180 712l26 44M1240 730l32 28M560 720l24 60M630 650l30 12-10 10-26-14M690 740l30-12M690 746l32-14M1250 790l20 10M1246 784l24-14M1250 800l24-10M920 770l70-30M480 606l20 4M550 560l6 16 10-14" />
    </g>
    <g fill="none" stroke="#959595" strokeWidth="1.100">
      <path d="M407 547L557 608L600 628L633 637L687 658L815 717M407 555L480 580L520 603L613 645L713 687L822 735M502 587L525 603M942 575L1176 808M944 593L1162 808M930 775L1005 805M930 780L1040 808" />
    </g>
    <g fontFamily={UI} fontSize="13" fill="#4b4c5c" stroke="#f3f0ec" strokeWidth="2.500" paintOrder="stroke" strokeOpacity=".8">
      {streets.map(([t, x, y, a, len, c], i) => <text key={i} transform={`translate(${x} ${y}) rotate(${a})`} textLength={len} fill={c}>{t}</text>)}
    </g>
    <path d={redLines} fill="none" stroke="#d40a0f" strokeWidth="3.700" strokeLinejoin="round" />
    <path d="M738 582L811 539L942 765L869 808z" fill="#2fb15e" stroke="#077d06" strokeWidth="2.600" />
    {cards.map(([x, y], i) => <path key={i} fill="#4b4d50" d={`M${x - 5.500} ${y - 4}h11v2h-11zM${x - 5.500} ${y - 1}h11v5h-11z`} />)}
    <g stroke="#f3f0ec" strokeWidth="1" strokeOpacity=".5" paintOrder="stroke" fill="#4b4d50">
      {caps.map(([x, y], i) => <path key={i} d={`M${x - 6} ${y - 2}l6-3 6 3-6 3zM${x - 4} ${y}l4 2 4-2v3l-4 2-4-2z`} />)}
      {halls.map(([x, y], i) => <path key={i} d={`M${x - 6} ${y + 6}h12v-1.500h-12zM${x - 5} ${y}h1.500v4h-1.500zM${x - 2} ${y}h1.300v4h-1.300zM${x + 1} ${y}h1.300v4h-1.300zM${x + 3.500} ${y}h1.500v4h-1.500zM${x - 6} ${y - 2}h4l2-2v-3h4v2h-3v1l2 2h3v1.500h-12z`} />)}
      {monuments.map(([x, y], i) => <path key={i} d={`M${x - 4} ${y + 5}v-6l3 1 1 2h1v-7h3v6h1v4z`} />)}
    </g>
    <circle cx="1075" cy="755.500" r="6.500" fill="#55575a" /><path d="M1075 751v9M1070.500 755.500h9" stroke="#e3d5cc" strokeWidth="2" />
    <g fontFamily={UI} fontSize="14.500" fontWeight="500" fill="#cc3e4a" textAnchor="middle" stroke="#f4ecea" strokeWidth="2" strokeOpacity=".8" paintOrder="stroke">
      {numbers.map(([t, x, y]) => <text key={t} x={x} y={y}>{t}</text>)}
    </g>
  </svg>
);

/* ---------- status bar ---------- */
const StatusBar = styled.footer`height: 38px; flex: none; display: flex; align-items: center; padding: 0 0 0 4px; font-family: ${TAHOMA}; font-size: 17px; color: #000;`;
const Field = styled.div<{ $w: number; $ml?: number; $pl?: number; $ls?: number }>`
  width: ${p => p.$w}px; margin-left: ${p => p.$ml ?? 0}px; height: 31px; flex: none; background: #fff; border: 1px solid #a9a9a9;
  border-radius: 3px; display: flex; align-items: center; padding: 1px 0 0 ${p => p.$pl ?? 6}px; white-space: nowrap; letter-spacing: ${p => p.$ls ?? 0}px;
`;
const Placeholder = styled.span`color: #7d7d7d; font-family: ${UI}; font-size: 17.500px; margin-left: 8px; letter-spacing: 0.65px;`;
const Clip = styled.span<{ $w: number; $ml: number }>`
  width: ${p => p.$w}px; margin-left: ${p => p.$ml}px; overflow: hidden; display: flex; justify-content: flex-end; flex: none; font-size: 14px;
`;
const FieldSide = styled.div<{ $w: number; $line?: boolean }>`
  margin-left: auto; width: ${p => p.$w}px; height: 100%; display: flex; flex-direction: column; gap: 7px; align-items: center; justify-content: center;
  background: linear-gradient(#fdfdfd, #efefef); ${p => p.$line && css`border-left: 1px solid #b6b6b6;`}
`;
const Gap = styled.div<{ $l: number; $ls?: number }>`margin-left: ${p => p.$l}px; flex: none; white-space: nowrap; letter-spacing: ${p => p.$ls ?? 0}px;`;
const Spin = () => (
  <FieldSide $w={20} $line>
    <svg width="11" height="6" viewBox="0 0 11 6"><path d="M0 6h11L5.500 0z" fill="#555" /></svg>
    <svg width="11" height="6" viewBox="0 0 11 6"><path d="M0 0h11L5.500 6z" fill="#555" /></svg>
  </FieldSide>
);

/* ---------- attribute table window ---------- */
const Dialog = styled.div`
  position: absolute; left: 831px; top: 224px; width: 377px; height: 296px; background: #efefef; border: 1px solid #6a6a6a;
  box-shadow: 0 4px 18px rgba(0,0,0,.38); display: flex; flex-direction: column;
`;
const DialogTitle = styled.div`height: 44px; background: #fff; display: flex; align-items: center; padding: 0 26px 2px 11px; flex: none; color: #000;`;
const DialogTools = styled.div`height: 43px; display: flex; align-items: center; flex: none; padding: 0 0 2px 4px;`;
const AttrRow = styled.div<{ $head?: boolean }>`
  display: grid; grid-template-columns: ${p => (p.$head ? '208px 150px 1fr' : '17px 191px 150px 1fr')}; height: ${p => (p.$head ? 32 : 45)}px; flex: none;
  background: ${p => (p.$head ? 'linear-gradient(#fdfdfd 50%, #f3f3f3 50%, #ececec)' : '#fff')};
  ${p => p.$head && css`border-top: 1px solid #b6b6b6;`}
`;
const ActiveCell = styled.div`border: 2px solid #00ef7c; background: linear-gradient(#f6fbff, #e8f4fe); display: flex; align-items: center; padding: 2px 0 0 1px; margin-right: 1px; letter-spacing: 0.08px;`;
const AttrBody = styled.div`flex: 1; background: linear-gradient(90deg, #efefef 17px, #fff 17px);`;
const DialogFooter = styled.div`height: 37px; flex: none; display: flex; align-items: center; padding: 0 3px; font-family: ${TAHOMA}; font-size: 17px; color: #000;`;
const FilterButton = styled.div`
  width: 156px; height: 31px; border: 1px solid #a9a9a9; border-radius: 3px; background: linear-gradient(#fff, #efefef);
  display: flex; align-items: center; padding-left: 4px; gap: 4px; white-space: nowrap; letter-spacing: 0.5px;
`;
const ViewButton = styled.div<{ $on?: boolean }>`
  width: 32px; height: 31px; display: flex; align-items: center; justify-content: center; border-radius: 3px;
  ${p => p.$on && css`background: #dcdcdc; border: 1px solid #a9a9a9;`}
`;
const TableGlyph = () => (
  <svg width="20" height="20" viewBox="0 0 20 20" fill="none"><rect x=".5" y=".5" width="19" height="19" fill="#fff" stroke="#6c98ca" /><rect x="1" y="1" width="18" height="5" fill="#bcd3ec" /><path d="M3 3.500h6M11 3.500h6" stroke="#5b88bd" strokeWidth="1.600" /><path d="M3 8.500h4M8 8.500h4M13 8.500h4M3 11.500h4M8 11.500h4M13 11.500h4M3 14.500h4M8 14.500h4M13 14.500h4M3 17h4M8 17h4M13 17h4M1 6.500h18" stroke="#5b88bd" /></svg>
);
const FormGlyph = () => (
  <svg width="20" height="20" viewBox="0 0 20 20" fill="none"><rect x=".5" y=".5" width="19" height="19" fill="#f3f6fa" stroke="#6c98ca" /><path d="M3 6h4M3 14h4" stroke="#444" strokeWidth="2" /><rect x="9" y="3.500" width="7.500" height="5" fill="#fff" stroke="#5b88bd" /><rect x="9" y="11.500" width="7.500" height="5" fill="#fff" stroke="#5b88bd" /></svg>
);

/* ---------- annotations ---------- */
const Frame = styled.div<{ $x: number; $y: number; $w: number; $h: number }>`
  position: absolute; left: ${p => p.$x - 1}px; top: ${p => p.$y - 1}px; width: ${p => p.$w}px; height: ${p => p.$h}px;
  border: 5px solid #e63c31; border-radius: 7px;
`;
const Badge = styled.div<{ $x: number; $y: number; $w: number }>`
  position: absolute; left: ${p => p.$x - 1}px; top: ${p => p.$y - 1}px; width: ${p => p.$w}px; height: 59px; border-radius: 3px;
  background: rgba(0,0,0,.8); color: #fff; font-size: 32px; line-height: 62px; text-align: center; -webkit-text-stroke: 0.4px #fff;
`;
const Over = styled.div`padding-top: 3px;`;

const menu: [string, number][] = [['Проект', 77], ['Правка', 78], ['Вид', 47], ['Слой', 58], ['Настройки', 105], ['Модули', 82], ['Вектор', 74], ['Растр', 62], ['Интернет', 93], ['Меш', 56], ['Анализ данных', 140], ['Справка', 80]];
const info = [['Идентификат...', '78:6:2021'], ['Кадастровый...', '78:06:0002021'], ['Кадастровый...', '78:06'], ['Район', '78:6'], ['Тип', '2']];

export default function App() {
  return (
    <>
      <GlobalStyle />
      <Window>
        <TitleBar>
          <Logo /><Title>*Trees — QGIS</Title>
          <WinButtons $gap={54}>
            <svg width="16" height="16" viewBox="0 0 16 16"><path d="M0 8.500h16" stroke="#999" /></svg>
            <svg width="16" height="16" viewBox="0 0 16 16" fill="none"><path d="M.5 .5h14.500v14.500H.5z" stroke="#888" /></svg>
            <svg width="16" height="16" viewBox="0 0 16 16"><path d="M.5 .5l15 15M15.500 .5l-15 15" stroke="#888" /></svg>
          </WinButtons>
        </TitleBar>
        <MenuBar>{menu.map(([t, w]) => <MenuItem key={t} $w={w}>{t}</MenuItem>)}</MenuBar>
        <Toolbar $h={51}>
          <Handle pl={9} w={18.500} />
          {[Page, Folder, Save, NewLayout, Layouts, StyleIcon].map((I, i) => <Slot key={i}><I /></Slot>)}
          <Handle />
          {[Hand, PanSel, ZoomIn, ZoomOut, ZoomFull, ZoomSel, ZoomLayer].map((I, i) => <Slot key={i}><I /></Slot>)}
          <Slot $dim><ZoomOne /></Slot><Slot><ZoomLast /></Slot><Slot $dim><ZoomLast next /></Slot>
          <Slot><MapView /></Slot><Slot><View3D /></Slot><Slot><Bookmark /></Slot><Slot><MapView book /></Slot><Slot><Clock /></Slot><Slot><Refresh /></Slot>
          <Handle />
          <Slot><SelectIcon /></Slot><Slot $w={17}><DropIcon /></Slot>
          <Slot><SelForm /></Slot><Slot $w={18}><DropIcon /></Slot>
          <Slot><Deselect /></Slot><Slot $w={18}><DropIcon /></Slot>
          <Slot $w={37} $end><More /></Slot><Handle pl={15} w={23} /><Slot><Identify /></Slot><Slot $w={20} $end><More /></Slot>
        </Toolbar>
        <Toolbar $h={51}>
          <Handle pl={9} w={18.500} />
          <Slot><AddLayer /></Slot><Slot><GeoPkg /></Slot><Slot><Vec /></Slot><Slot><Feather /></Slot><Slot><Chip /></Slot><Slot><Mesh /></Slot><Slot><Mesh v /></Slot>
          <Handle />
          <Slot $dim><Pencils /></Slot><Slot $w={40}><Pencil /></Slot><Slot $dim><SaveEdit /></Slot><Slot $dim><AddPoly /></Slot><Slot $dim><Vertex /></Slot>
          <Slot $w={18}><DropIcon c="#a2a2a2" /></Slot>
          {[EditTable, Trash, Cut, Copy, Paste].map((I, i) => <Slot key={i} $dim><I /></Slot>)}
          <Slot $dim><Undo /></Slot><Slot $dim><Undo flip /></Slot>
          <Handle />
          <Slot><Abc /></Slot><Slot><Diagram /></Slot><Slot $w={11}><Separator /></Slot>
          <Slot $w={52} $end><More /></Slot><Handle pl={15} w={26} /><Slot><GlobePlus /></Slot><Slot $w={17} $end><More /></Slot>
          <Handle pl={16} w={25} /><Slot><Python /></Slot><Slot $w={18} $end><More /></Slot><Handle pl={16} w={25} /><Slot><Help /></Slot><Handle pl={15} w={22} />
        </Toolbar>
        <Toolbar $h={50}>
          <Handle pl={9} w={18.500} /><Slot $w={44} $y={6}><Statue /></Slot><Handle pl={13} w={20} /><Slot $w={44}><XLogo /></Slot><Handle pl={14} w={23} />
          <Slot><GreenTool kind="nodes" /></Slot><Slot><GreenTool kind="grid" /></Slot><Slot><GreenTool kind="cursor" /></Slot><Slot><GreenTool kind="search" /></Slot>
        </Toolbar>
        <Main>
          <LayersDock>
            <DockTitle $pl={4} $h={30} $pr={3}>Слои<DockBtns /></DockTitle>
            <LayerTools>
              <Slot $w={33}><Ic s={22}><path d="M0 5l9-2 2 10-9 4z" fill="#f0d33c" /><path d="M0 9l7 2 2 8-8 0z" fill="#dd4c3c" /><path d="M2 19h8v3H5z" fill="#5b8abd" /><path d="M7 12l6-4 6 5-6 9c-4 0-6-4-6-10z" fill="#d9a456" stroke="#8a6030" /><path d="M15 10l8-9" stroke="#b5813f" strokeWidth="3" /></Ic></Slot>
              <Slot $w={33}><Ic s={19}><path d="M8 6h10v15H8zM4 10v12h8M12 3h9v12h-3" stroke="#777" strokeWidth="1.400" /><path d="M13 17V2M10 6l3-4 3 4" stroke="#567" strokeWidth="1.500" /><Plus c="#5aa469" /></Ic></Slot>
              <Slot $w={34}><Ic><path d="M0 12C5 3 18 3 23 12c-5 7-18 7-23 0z" fill="#fff" stroke="#999" /><path d="M1 8C6 2 16 1 22 8" stroke="#aaa" /><circle cx="12" cy="11" r="5.500" fill="#6f9bc9" stroke="#446b94" /><circle cx="12" cy="11" r="2.200" fill="#111" /><Drop x={15} y={17} /></Ic></Slot>
              <Slot $w={34}><Ic><rect x="2" y="1" width="20" height="4" fill="#fbe24b" stroke="#b9980c" /><path d="M2 7h20l-7 8v9l-5-3v-6z" fill="#6a96c6" stroke="#3c648f" /><Drop x={15} y={18} /></Ic></Slot>
              <Slot $w={36}><Ic><text x="-1" y="14" fontSize="28" fontFamily='"Liberation Serif", serif' fill="#6a3f78" stroke="#6a3f78" strokeWidth=".5">ε</text><path d="M9 12h10v11h-3v-6h-4v6H9z" fill="#c4c4c4" stroke="#aaa" /></Ic></Slot>
              <Slot $w={20}><DropIcon /></Slot>
              <Slot $w={30}><Ic s={18}><path d="M1 3h7M1 3v18h7M1 12h5" stroke="#888" strokeWidth="1.500" /><path d="M8 10h3v4H8zM8 18h3v4H8z" stroke="#e79a2c" strokeWidth="2" /><path d="M13 2v13H9l6 8 7-8h-4V2z" fill="#4f7cae" /></Ic></Slot>
              <Slot $w={32}><Ic s={18}><path d="M1 3h7M1 3v18h7M1 12h5" stroke="#888" strokeWidth="1.500" /><path d="M8 10h4v4H8zM8 18h4v4H8z" stroke="#e79a2c" strokeWidth="2" /><path d="M13 22V9H9l6-7 7 7h-4v13z" fill="#5b8abd" stroke="#3c648f" /></Ic></Slot>
              <Slot $w={32}><Ic s={18}><rect x="2" y="2" width="17" height="17" stroke="#777" strokeWidth="1.500" /><rect x="13" y="14" width="9" height="8" rx="1.500" fill="#d93f46" /><path d="M15 18h5" stroke="#fff" strokeWidth="2" /></Ic></Slot>
            </LayerTools>
            <TreeFrame>
              <Tree>
                <TreeRow $h={29} $pl={34} $sel><Check /><SwatchSolid /><Label $kind="active">Кадастровые кварталы (временный</Label></TreeRow>
                <TreeRow $h={27} $pl={10}><Twist><DropIcon /></Twist><RowIcon $l={1} $r={0}><Check /></RowIcon>
                  <RowIcon $l={8} $r={7}><svg width="14" height="13" viewBox="0 0 14 13"><path fill="#c5d3e4" d="M0 0h14v13H0z" /><path fill="#1d3a5e" d="M0 0h4v4H0zM9 4h4v4H9zM4 4h5v4H4zM0 9h4v4H0z" /><path fill="#5f86b0" d="M4 0h5v4H4zM9 9h5v4H9z" /></svg></RowIcon>
                  <Label $kind="bold">Кадастровые кварталы, округа</Label></TreeRow>
                <TreeRow $h={27} $pl={10}><Twist><DropIcon /></Twist><RowIcon $l={1} $r={0}><Check on={false} /></RowIcon>
                  <RowIcon $l={7} $r={6} $b={3}><svg width="16" height="12" viewBox="0 0 16 12"><path d="M1 2c4-3 5 0 8-1s5-1 6 2c1 4-2 6-4 5-4-1-4 1-7 3C0 11 0 4 1 2z" fill="#e2e2e2" stroke="#999" /></svg></RowIcon>
                  <Label $kind="italic">Границы территорий объектов</Label></TreeRow>
                {Array.from({ length: 14 }, (_, i) => (
                  <TreeRow key={i} $h={29} $pl={64}><Check /><SwatchBox>{i % 2 ? <Outline /> : <Spiky />}</SwatchBox>
                    <Label>{i % 2 ? 'Граница историко-культурного' : 'Граница территории объекта культ'}</Label></TreeRow>
                ))}
              </Tree>
              <VBar><Piece $v $len={21}><Tri d="u" /></Piece><Piece $v $len={29} $groove /><Piece $v $len={275} /><Piece $v $groove /><Piece $v $last $len={20}><Tri d="d" /></Piece></VBar>
              <HBar><Piece $len={22}><Tri d="l" /></Piece><Piece $len={152} /><Piece $groove /><Piece $last $len={20}><Tri d="r" /></Piece></HBar>
              <Corner />
            </TreeFrame>
          </LayersDock>
          <RightSide>
            <DockTitle $pl={4} $h={39} $pr={2}>Информация об объекте<DockBtns /></DockTitle>
            <InfoFrame>
              <InfoTable>
                <InfoRow $head><Cell $center $pl={17}>Параметр</Cell><Cell $center>Значение</Cell></InfoRow>
                {info.map(([a, b], i) => <InfoRow key={i}><Cell $num>{i + 1}</Cell><Cell $small>{a}</Cell><Cell>{b}</Cell></InfoRow>)}
              </InfoTable>
              <VBar><Piece $v $len={21}><Tri d="u" /></Piece><Piece $v $len={165} /><Piece $v $groove /><Piece $v $last $len={20}><Tri d="d" /></Piece></VBar>
            </InfoFrame>
            <Splitter><SplitDots /></Splitter>
            <MapFrame><MapCanvas /></MapFrame>
          </RightSide>
        </Main>
        <StatusBar>
          <Field $w={237} $pl={11}>
            <svg width="19" height="19" viewBox="0 0 19 19" fill="none"><circle cx="7.500" cy="7.500" r="6" stroke="#999" strokeWidth="1.500" /><path d="M12 12l6 6" stroke="#999" strokeWidth="3" /></svg>
            <Placeholder>Искать (Ctrl+K)</Placeholder>
          </Field>
          <Clip $w={4} $ml={61}>ц</Clip>
          <Field $w={162} $ml={5} $ls={0.27}>3371684 8387373</Field>
          <Gap $l={5}><svg width="22" height="23" viewBox="0 0 22 23" fill="none"><path d="M2 4l4-3 5 3 6 9-2 7-5 2-4-4z" fill="#eee" stroke="#111" strokeWidth="1.500" /><path d="M3 6l4 8M6 2l5 9" stroke="#111" strokeWidth="2" /><circle cx="13" cy="16" r="4.500" fill="#fff" stroke="#111" strokeWidth="2" /><circle cx="13" cy="16" r="1.500" fill="#111" /><path d="M12 4l9-3M14 8l7 1" stroke="#333" strokeDasharray="2 1.500" /></svg></Gap>
          <Clip $w={5} $ml={13}>ц</Clip>
          <Field $w={123} $ml={3} $pl={4}>1:21673<FieldSide $w={32}><DropIcon /></FieldSide></Field>
          <Gap $l={15}><svg width="13" height="16" viewBox="0 0 13 16" fill="none"><path d="M3 7V4a3.500 3.500 0 0 1 7 0v3" stroke="#666" strokeWidth="1.500" /><rect x=".5" y="7" width="12" height="8.500" rx="1" fill="#5c5c5c" /></svg></Gap>
          <Clip $w={5} $ml={13}>п</Clip>
          <Field $w={115} $ml={2} $pl={5} $ls={0.3}>100%<Spin /></Field>
          <Clip $w={5} $ml={8}>с</Clip>
          <Field $w={107} $ml={9} $pl={4}>0,0 º<Spin /></Field>
          <Gap $l={6}><Check /></Gap>
          <Gap $l={8}>Отрисовка</Gap>
          <Gap $l={16}><svg width="15" height="14" viewBox="0 0 15 14" fill="none" stroke="#666"><ellipse cx="7.500" cy="7" rx="7" ry="6.500" fill="#ccc" stroke="#888" /><path d="M7.500 0v14M.5 7h14M1.500 4h12M1.500 10h12M7.500 .5c-5 4-5 9 0 13M7.500 .5c5 4 5 9 0 13" strokeWidth=".7" /></svg></Gap>
          <Gap $l={2} $ls={0.35}>EPSG:3857</Gap>
          <Gap $l={37}><svg width="25" height="24" viewBox="0 0 25 24"><path d="M12 1c7 0 12 4 12 9.500 0 4-2 6-5 8l4 4c-4 1-7-1-9-3.500C5 20 0 16 0 10.500 0 4.500 6 1 12 1z" fill="#5f5f5f" /><g fill="#fff"><circle cx="6.500" cy="10" r="1.700" /><circle cx="12" cy="10" r="1.700" /><circle cx="17.500" cy="10" r="1.700" /></g></svg></Gap>
        </StatusBar>

        <ChipButton><svg width="15" height="13" viewBox="0 0 15 13" fill="none" stroke="#666"><rect x="1.500" y="3.500" width="12" height="6" rx="1" /><path d="M3.500 0v3M6.500 0v3M9.500 0v3M12 0v3M3.500 10v3M6.500 10v3M9.500 10v3M12 10v3M0 6.500h1.500M13.500 6.500H15" /></svg></ChipButton>

        <Dialog>
          <DialogTitle>
            <Logo /><Title $color="#111" $ml={10}>Кадастровые...</Title>
            <WinButtons $gap={54}>
              <svg width="16" height="16" viewBox="0 0 16 16"><path d="M0 8.500h16" stroke="#111" /></svg>
              <svg width="16" height="16" viewBox="0 0 16 16" fill="none"><path d="M.5 .5h14.500v14.500H.5z" stroke="#111" /></svg>
              <svg width="16" height="16" viewBox="0 0 16 16"><path d="M.5 .5l15 15M15.500 .5l-15 15" stroke="#111" /></svg>
            </WinButtons>
          </DialogTitle>
          <DialogTools>
            <Slot $w={34}><Pencil /></Slot><Slot $w={34} $dim><EditTable s={22} /></Slot><Slot $w={32} $dim><SaveEdit /></Slot>
            <Slot $w={11}><Separator /></Slot>
            <Slot $w={32} $dim><Ic><rect x="1" y="2" width="20" height="5" fill="#bcd" stroke="#888" /><rect x="1" y="9" width="22" height="5" fill="#e0d060" stroke="#888" /><rect x="1" y="16" width="14" height="5" fill="#eee" stroke="#888" /><circle cx="19" cy="19" r="5" fill="#998" /><Drop x={14} y={18} c="#000" /></Ic></Slot>
            <Slot $w={33} $dim><Trash /></Slot><Slot $w={34} $dim><Cut /></Slot><Slot $w={33} $dim><Copy /></Slot><Slot $w={33} $dim><Paste /></Slot>
            <Slot $w={12}><Separator /></Slot>
            <Slot $w={32}><Ic><rect x="6" y="8.500" width="13" height="13" fill="#fbe24b" stroke="#c9a500" /><text x="0" y="14" fontSize="28" fontFamily='"Liberation Serif", serif' fill="#6a3f78" stroke="#6a3f78" strokeWidth=".5">ε</text></Ic></Slot>
            <Slot $w={45} $end><More /></Slot>
          </DialogTools>
          <AttrRow $head><Cell $center $pl={17}>Кадастровый номер</Cell><Cell $center>Идентификатор</Cell><Cell /></AttrRow>
          <AttrRow><Cell $num>1</Cell><ActiveCell>78:06:0002021</ActiveCell><Cell>78:6:2021</Cell><Cell>N</Cell></AttrRow>
          <AttrBody />
          <HBar><Piece $len={22}><Tri d="l" /></Piece><Piece $len={40} /><Piece $groove /><Piece $last $len={21}><Tri d="r" /></Piece></HBar>
          <DialogFooter>
            <FilterButton><TableGlyph />Все объекты<Over><svg width="12" height="14" viewBox="0 0 12 14"><path d="M0 8h11L5.500 14z" fill="#555" /></svg></Over></FilterButton>
            <WinButtons $gap={0}><ViewButton><FormGlyph /></ViewButton><ViewButton $on><TableGlyph /></ViewButton></WinButtons>
          </DialogFooter>
        </Dialog>

        <Frame $x={24} $y={294} $w={361} $h={35} />
        <Frame $x={402} $y={223} $w={397} $h={305} />
        <Frame $x={831} $y={341} $w={361} $h={54} />
        <Badge $x={166} $y={225} $w={46}>1</Badge>
        <Badge $x={566} $y={152} $w={52}>2</Badge>
        <Badge $x={991} $y={152} $w={52}>3</Badge>
        <Badge $x={815} $y={644} $w={52}>4</Badge>
      </Window>
    </>
  );
}
